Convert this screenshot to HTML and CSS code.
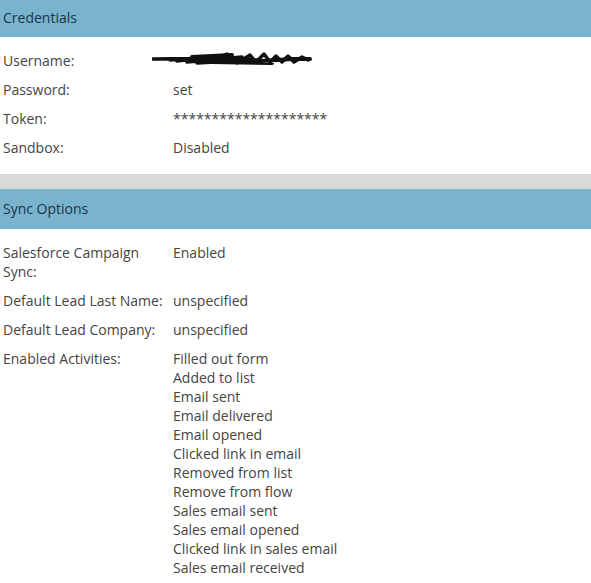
FILE: index.html
```html
<!DOCTYPE html>
<html>
<head>
<meta charset="utf-8">
<link rel="stylesheet" href="styles.css">
</head>
<body>
<section class="panel">
  <div class="panel-header panel-header--first">Credentials</div>
  <div class="panel-body">
    <div class="row"><div class="label">Username:</div><div class="value value--redacted"><svg class="scribble" width="162" height="18" viewBox="0 0 162 18"><path d="M1 9 L40 8.5 M18 10 L60 7 M25 11 L70 6 M35 12 L90 7 M45 13 L100 10 M55 12 L75 4 L85 13 L98 5 L104 12 L112 4 L118 12 L124 6 L130 12 L136 6 L142 12 L150 7 L156 10" stroke="#111" stroke-width="3.4" fill="none" stroke-linecap="round" stroke-linejoin="round"/><path d="M30 10 L95 9 L110 11 L140 9 L158 9 M40 7 L80 5 M60 12 L120 13" stroke="#111" stroke-width="4" fill="none" stroke-linecap="round"/></svg></div></div>
    <div class="row"><div class="label">Password:</div><div class="value">set</div></div>
    <div class="row"><div class="label">Token:</div><div class="value">********************</div></div>
    <div class="row"><div class="label">Sandbox:</div><div class="value">Disabled</div></div>
  </div>
</section>
<div class="divider"></div>
<section class="panel">
  <div class="panel-header">Sync Options</div>
  <div class="panel-body">
    <div class="row"><div class="label">Salesforce Campaign Sync:</div><div class="value">Enabled</div></div>
    <div class="row"><div class="label">Default Lead Last Name:</div><div class="value">unspecified</div></div>
    <div class="row"><div class="label">Default Lead Company:</div><div class="value">unspecified</div></div>
    <div class="row"><div class="label">Enabled Activities:</div>
      <ul class="value list">
        <li>Filled out form</li>
        <li>Added to list</li>
        <li>Email sent</li>
        <li>Email delivered</li>
        <li>Email opened</li>
        <li>Clicked link in email</li>
        <li>Removed from list</li>
        <li>Remove from flow</li>
        <li>Sales email sent</li>
        <li>Sales email opened</li>
        <li>Clicked link in sales email</li>
        <li>Sales email received</li>
      </ul>
    </div>
  </div>
</section>
</body>
</html>
```
FILE: styles.css
```css
html, body {
  margin: 0;
  padding: 0;
  background: #ffffff;
}
body {
  font-family: "Open Sans", "Liberation Sans", sans-serif;
  font-size: 14px;
  line-height: 19px;
  color: #444444;
}
.panel-header {
  background: #7ab3cd;
  color: #1b3546;
  height: 40px;
  line-height: 40px;
  padding-left: 3px;
}
.panel-header--first {
  height: 37px;
  line-height: 36px;
}
.panel-body {
  padding: 9px 0 12px;
}
.row {
  display: flex;
  padding: 5px 0;
}
.label {
  width: 167px;
  padding: 0 3px 0 3px;
  flex-shrink: 0;
  box-sizing: border-box;
  width: 173px;
}
.value {
  margin: 0;
}
.value--redacted {
  position: relative;
  height: 19px;
}
.scribble {
  position: absolute;
  left: -21px;
  top: -1px;
}
.list {
  list-style: none;
  padding: 0;
}
.divider {
  height: 15px;
  background: #d9d9d9;
}
```
